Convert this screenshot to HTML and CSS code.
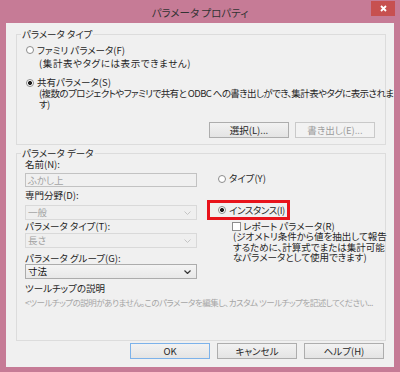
FILE: index.html
```html
<!DOCTYPE html>
<html lang="ja">
<head>
    <meta charset="UTF-8">
    <title>パラメータ プロパティ</title>
    <link rel="stylesheet" href="styles.css">
</head>
<body>
    <div class="window">
        <div class="titlebar">
            <span></span>
            <div class="title">パラメータ プロパティ</div>
            <div class="close">
                <svg width="7" height="7" viewBox="0 0 7 7"><path d="M1 1L6 6M6 1L1 6" stroke="#fff" stroke-width="1.8"/></svg>
            </div>
        </div>

        <div class="client">
            <fieldset class="group group-type">
                <legend>パラメータ タイプ</legend>
                <div class="option"><span class="radio"></span>ファミリ パラメータ(F)</div>
                <div class="note note-family">(集計表やタグには表示できません)</div>
                <div class="option option-shared"><span class="radio on"></span>共有パラメータ(S)</div>
                <div class="note note-shared">(複数のプロジェクトやファミリで共有と ODBC への書き出しができ、集計表やタグに表示されま<br>す)</div>
                <div class="actions">
                    <button class="btn">選択(L)...</button>
                    <button class="btn" disabled>書き出し(E)...</button>
                </div>
            </fieldset>

            <fieldset class="group group-data">
                <legend>パラメータ データ</legend>
                <div class="data-cols">
                    <div class="fields">
                        <div class="label">名前(N):</div>
                        <div class="textbox">ふかし上</div>
                        <div class="label label-discipline">専門分野(D):</div>
                        <div class="combo combo-discipline">一般
                            <svg width="7" height="4" viewBox="0 0 7 4"><polyline points="0.5,0.5 3.5,3.5 6.5,0.5" fill="none" stroke="#c4c4c4"/></svg>
                        </div>
                        <div class="label label-type">パラメータ タイプ(T):</div>
                        <div class="combo combo-type">長さ
                            <svg width="7" height="4" viewBox="0 0 7 4"><polyline points="0.5,0.5 3.5,3.5 6.5,0.5" fill="none" stroke="#c4c4c4"/></svg>
                        </div>
                        <div class="label label-group">パラメータ グループ(G):</div>
                        <div class="combo active">寸法
                            <svg width="7" height="4" viewBox="0 0 7 4"><polyline points="0.5,0.5 3.5,3.5 6.5,0.5" fill="none" stroke="#333" stroke-width="1.2"/></svg>
                        </div>
                    </div>

                    <div class="scope">
                        <div class="option option-type"><span class="radio"></span>タイプ(Y)</div>
                        <div class="highlight">
                            <div class="option"><span class="radio on"></span>インスタンス(I)</div>
                        </div>
                        <div class="check-row"><span class="checkbox"></span>レポート パラメータ(R)</div>
                        <div class="check-note">(ジオメトリ条件から値を抽出して報告<br>するために、計算式でまたは集計可能<br>なパラメータとして使用できます)</div>
                    </div>
                </div>

                <div class="tooltip">
                    <div class="label">ツールチップの説明</div>
                    <div class="tooltip-text">&lt;ツールチップの説明がありません。このパラメータを編集し、カスタム ツールチップを記述してください...</div>
                </div>
            </fieldset>

            <div class="footer">
                <button class="btn default">OK</button>
                <button class="btn">キャンセル</button>
                <button class="btn">ヘルプ(H)</button>
            </div>
        </div>
    </div>
</body>
</html>
```

FILE: styles.css
```css
body {
    margin: 0;
    font-family: "Noto Sans CJK JP", "Noto Sans", sans-serif;
    font-size: 9.5px;
    font-feature-settings: "palt";
    color: #262626;
}

.window {
    width: 400px;
    height: 372px;
    background-color: #c67b96;
    display: flex;
    flex-direction: column;
}

.titlebar {
    height: 23px;
    display: grid;
    grid-template-columns: 1fr auto 1fr;
}

.title {
    font-size: 10.5px;
    line-height: 25px;
    color: #333;
}

.close {
    justify-self: end;
    width: 24px;
    height: 15px;
    margin: 1px 5px 0 0;
    background-color: #c75050;
    display: flex;
    align-items: center;
    justify-content: center;
}

.client {
    margin: 0 6px;
    height: 344px;
    box-sizing: border-box;
    padding: 5px 8px 0 10px;
    background-color: #f0f0f0;
}

/* group boxes */
.group {
    margin: 0;
    min-width: 0;
    border: 1px solid #dcdcdc;
    padding: 4px 10px 6px 0;
}

.group legend {
    margin-left: 4px;
    padding: 0 1px;
    line-height: 12px;
}

.group-data {
    margin-top: 2px;
    padding: 0 10px 0 0;
    height: 194px;
    box-sizing: border-box;
}

.option {
    display: flex;
    align-items: center;
    gap: 3px;
    margin-left: 9px;
    line-height: 12px;
    white-space: nowrap;
}

.option-shared {
    margin-top: 8px;
    line-height: 11px;
}

.note {
    margin: 2px 0 0 22px;
    line-height: 11px;
    white-space: nowrap;
}

.note-family {
    letter-spacing: 0.6px;
}

.note-shared {
    margin-top: 0;
    letter-spacing: -0.6px;
}

.radio {
    width: 8px;
    height: 8px;
    box-sizing: border-box;
    border: 1px solid #8c8c8c;
    border-radius: 50%;
    background: #fff;
    flex: none;
}

.radio.on {
    background: radial-gradient(circle, #1e1e1e 0 1.7px, #fff 2.3px);
}

.actions {
    display: flex;
    justify-content: flex-end;
    gap: 6px;
    margin-top: 12px;
}

.btn {
    width: 80px;
    height: 16px;
    padding: 0;
    font: inherit;
    line-height: 14px;
    color: #262626;
    border: 1px solid #adadad;
    background: linear-gradient(#f2f2f2, #e4e4e4);
}

.btn:disabled {
    color: #9a9a9a;
    border-color: #c9c9c9;
    background: #f2f2f2;
}

.btn.default {
    border-color: #7cb2ea;
}

/* parameter data */
.data-cols {
    display: flex;
    gap: 10px;
}

.fields {
    flex: none;
    width: 172px;
    margin-left: 8px;
}

.label {
    line-height: 11px;
}

.textbox {
    margin-top: 3px;
    height: 14px;
    box-sizing: border-box;
    border: 1px solid #c2c2c2;
    padding-left: 2px;
    line-height: 12px;
    color: #a3a3a3;
}

.label-discipline {
    margin-top: 3px;
}

.combo {
    margin-top: 4px;
    height: 15px;
    box-sizing: border-box;
    border: 1px solid #d9d9d9;
    background-color: #efefef;
    padding: 0 5px 0 2px;
    display: flex;
    align-items: center;
    justify-content: space-between;
    line-height: 13px;
    color: #a3a3a3;
}

.combo-type {
    margin-top: 1px;
}

.combo.active {
    margin-top: 0;
    border-color: #acacac;
    background: linear-gradient(#f4f4f4, #e8e8e8);
    color: #111;
}

.label-type {
    margin-top: 1px;
}

.label-group {
    margin-top: 5px;
}

.scope {
    flex: 1;
    min-width: 0;
}

.option-type {
    margin: 14px 0 0 11px;
    line-height: 11px;
}

.highlight {
    margin-top: 16px;
    width: 83px;
    height: 20px;
    box-sizing: border-box;
    border: 3px solid #e8131b;
    display: flex;
    align-items: center;
}

.highlight .option {
    margin-left: 8px;
    line-height: 11px;
    letter-spacing: -0.4px;
}

.check-row {
    margin: 1px 0 0 25px;
    display: flex;
    align-items: center;
    gap: 2px;
    line-height: 10px;
    white-space: nowrap;
}

.checkbox {
    width: 9px;
    height: 9px;
    box-sizing: border-box;
    border: 1px solid #8c8c8c;
    background: #fff;
}

.check-note {
    margin-left: 26px;
    line-height: 10.5px;
    white-space: nowrap;
}

.tooltip {
    margin: 4px 0 0 8px;
}

.tooltip-text {
    margin-top: 3px;
    font-size: 8.5px;
    line-height: 11px;
    color: #a6a6a6;
    white-space: nowrap;
    letter-spacing: -0.5px;
}

.footer {
    display: flex;
    justify-content: flex-end;
    gap: 7px;
    margin-top: 2px;
    padding-right: 2px;
}
```
